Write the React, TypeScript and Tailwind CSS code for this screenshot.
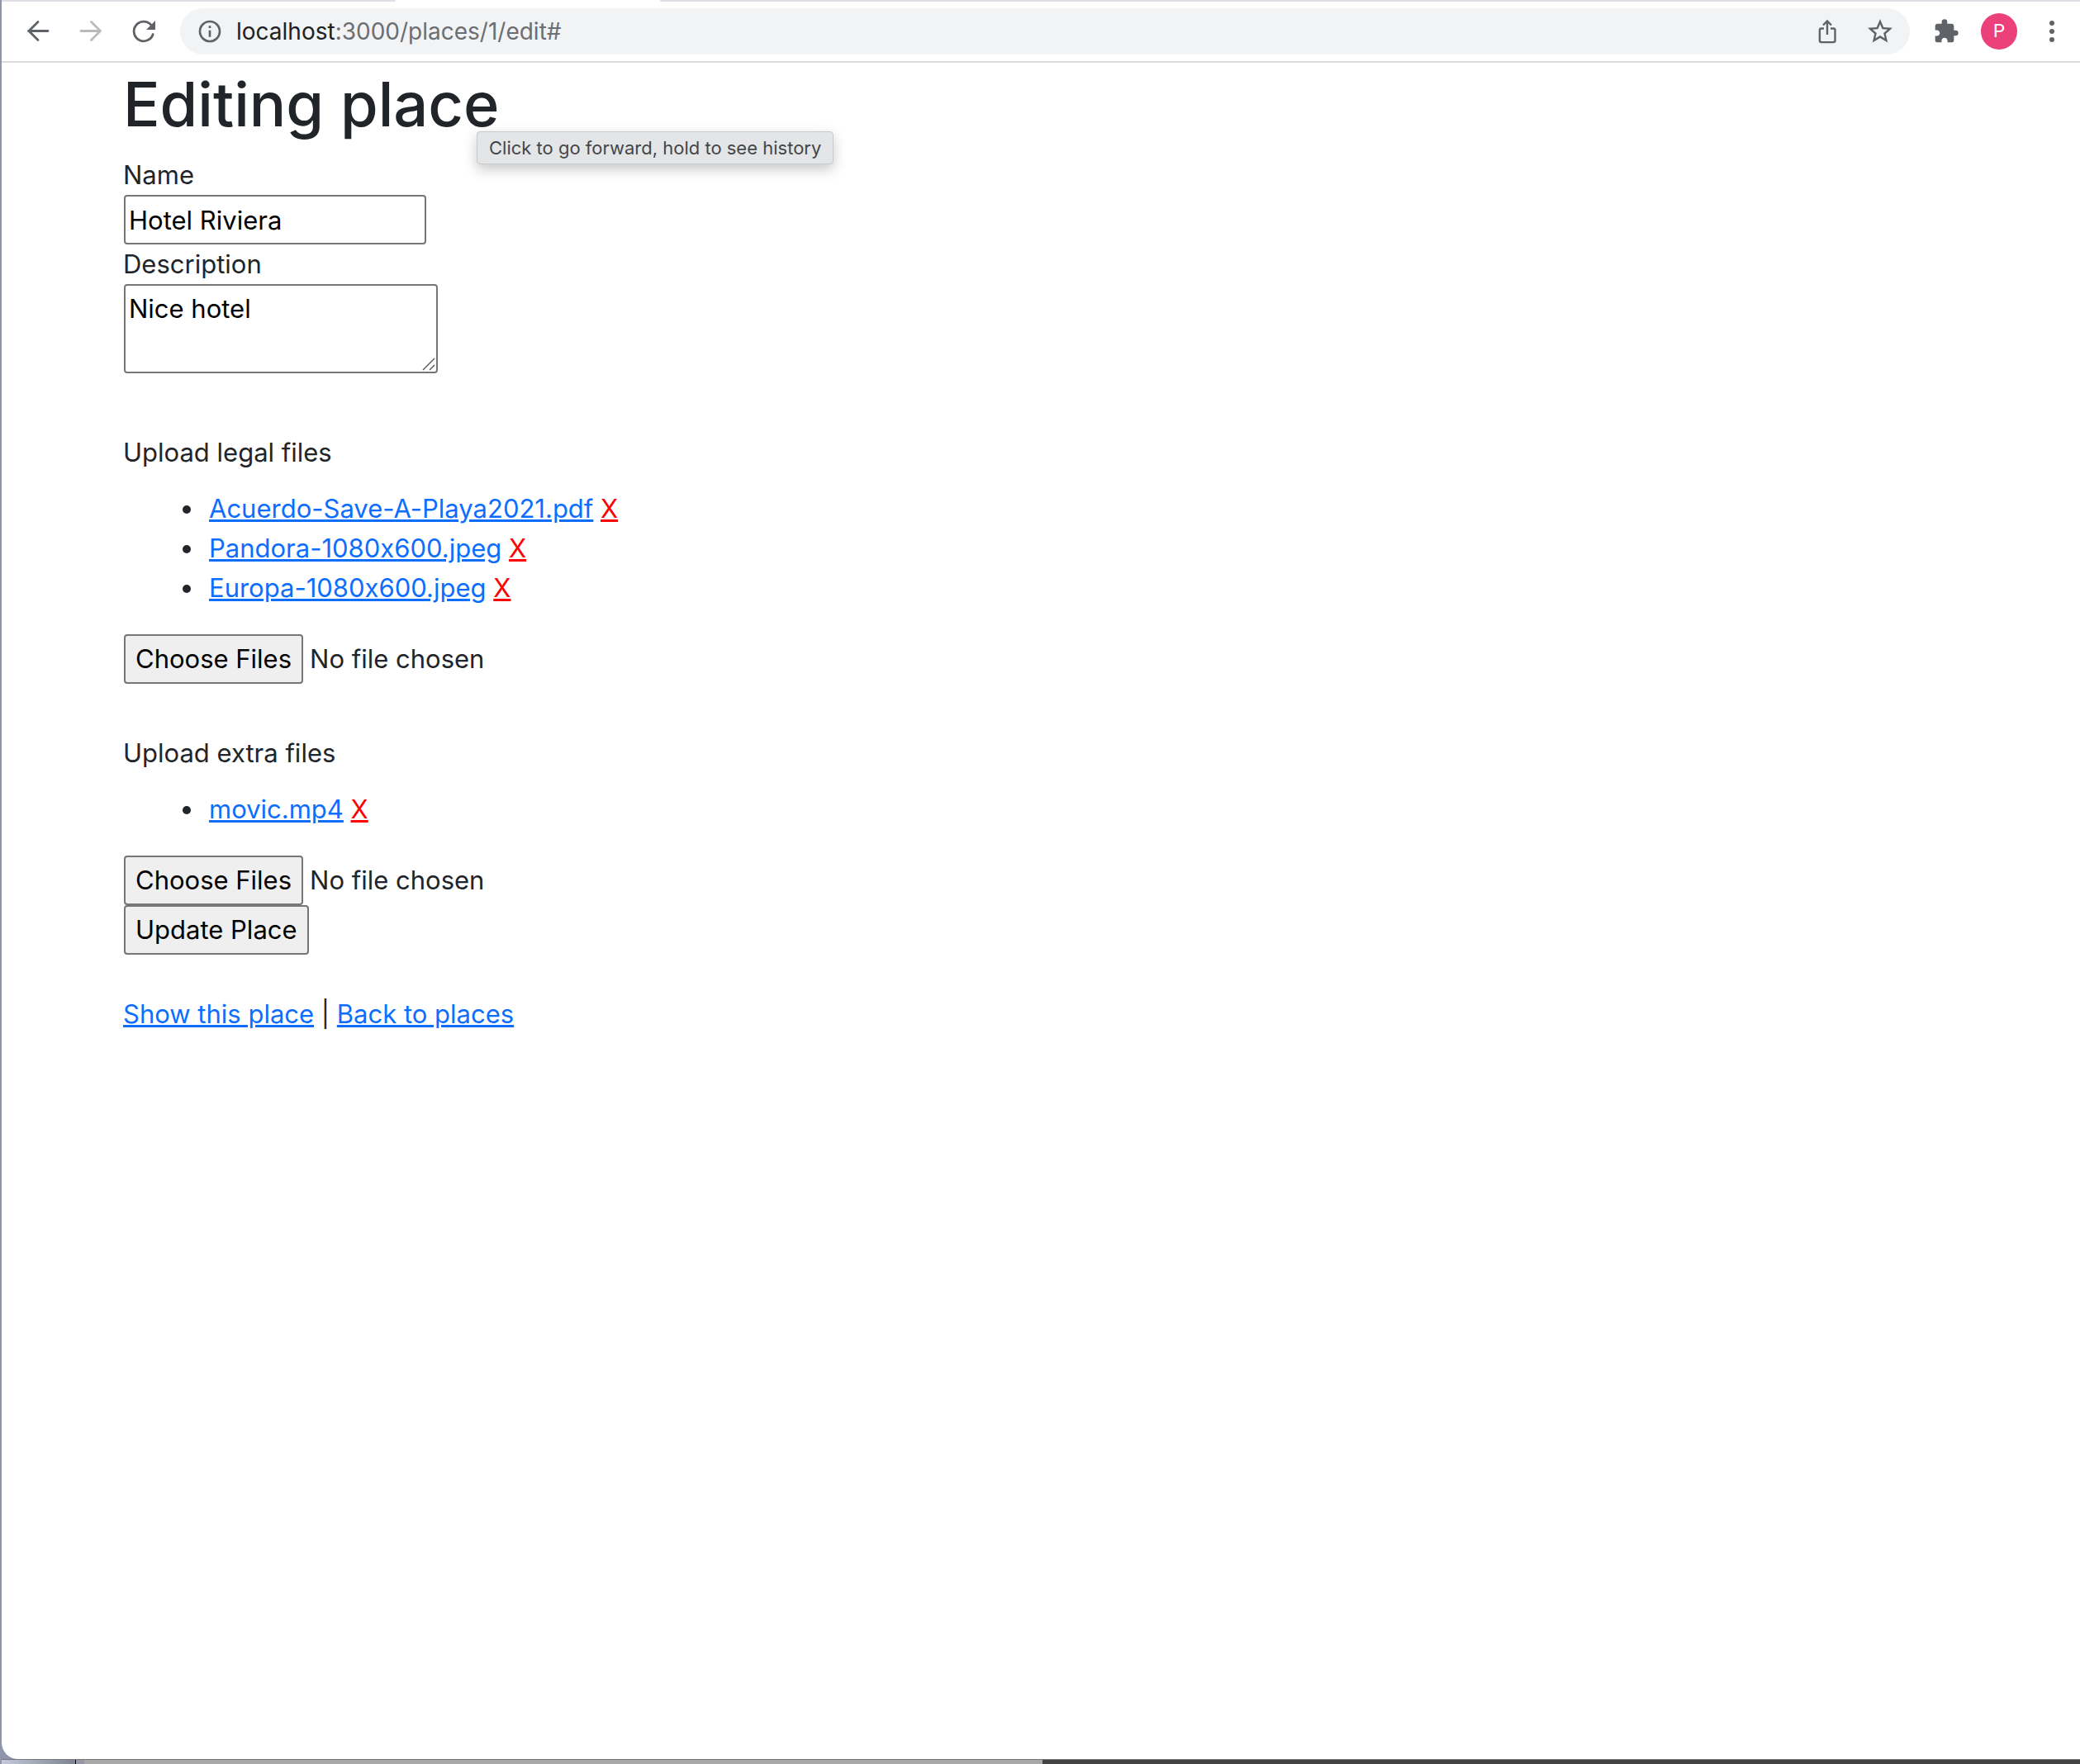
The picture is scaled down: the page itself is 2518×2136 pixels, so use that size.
import React from "react";

const links = "text-[#0d6efd] underline";
const field = "rounded border-2 border-[#767676] bg-white text-black";
const fileInput =
  "ml-px block w-full text-[31px] leading-[48px] h-[60px] file:mr-2 file:h-[60px] file:rounded file:border-2 file:border-solid file:border-[#767676] file:bg-[#efefef] file:px-3 file:text-black";

function FileList({ files }: { files: string[] }) {
  return (
    <ul className="mb-8 mt-5 list-outside list-disc pl-[99px]">
      {files.map((f) => (
        <li key={f} className="pl-[5px]">
          <a href="#" className={links}>{f}</a>{" "}
          <a href="#" aria-label={"Remove " + f} className="text-[#ff0000] underline">X</a>
        </li>
      ))}
    </ul>
  );
}

function Toolbar() {
  return (
    <header className="shrink-0 border-b-2 border-[#dcdcdd] bg-white text-[#5f6368]">
      <div className="flex h-0.5">
        <div className="w-[477px] rounded-br-sm bg-[#dfdfe5]" />
        <div className="w-[320px] bg-white" />
        <div className="grow rounded-bl-sm bg-[#dfdfe5]" />
      </div>
      <div className="flex h-[72px] items-center pl-6 pr-[14px]">
        <button aria-label="Back" className="size-10">
          <svg viewBox="0 0 40 40" className="size-10" fill="none" stroke="currentColor" strokeWidth="2.8" strokeLinecap="round" strokeLinejoin="round"><path d="M32 19.500H8.500M20 8.500l-11 11 11 11" /></svg>
        </button>
        <button aria-label="Forward" className="ml-6 size-10 text-[#bababc]">
          <svg viewBox="0 0 40 40" className="size-10" fill="none" stroke="currentColor" strokeWidth="2.8" strokeLinecap="round" strokeLinejoin="round"><path d="M8 19.500h23.500M20.500 8.500l11 11-11 11" /></svg>
        </button>
        <button aria-label="Reload" className="ml-6 size-10">
          <svg viewBox="0 0 40 40" className="size-10" fill="none" stroke="currentColor" strokeWidth="2.800" strokeLinecap="round"><path d="M31.200 23.500A11.800 11.800 0 1 1 28.500 11.800" /><path d="M34 7v11H23z" fill="currentColor" stroke="none" /></svg>
        </button>
        <div className="ml-6 flex h-14 grow items-center rounded-full bg-[#f1f3f4] pl-5 pr-[18px]">
          <svg viewBox="0 0 24 24" className="size-8 shrink-0" fill="currentColor"><path d="M11 17h2v-6h-2v6zm1-15a10 10 0 1 0 0 20 10 10 0 0 0 0-20zm0 18a8 8 0 1 1 0-16 8 8 0 0 1 0 16zM11 9h2V7h-2v2z" /></svg>
          <div className="ml-4 grow text-[28px] leading-10 text-[#6b6e72]">
            <span className="text-[#202124]">localhost</span>:3000/places/1/edit#
          </div>
          <button aria-label="Share" className="size-9">
            <svg viewBox="0 0 36 36" className="size-9" fill="none" stroke="currentColor" strokeWidth="2.400"><path d="M14 14.500h-3.100a2 2 0 0 0-2 2v12.600a2 2 0 0 0 2 2h14.600a2 2 0 0 0 2-2V16.500a2 2 0 0 0-2-2H22M18 22V6M13 10.500l5-5 5 5" /></svg>
          </button>
          <button aria-label="Bookmark" className="ml-7 size-9">
            <svg viewBox="0 0 24 24" className="size-9" fill="currentColor"><path d="M22 9.240l-7.190-.62L12 2 9.190 8.630 2 9.240l5.460 4.730L5.820 21 12 17.270 18.180 21l-1.630-7.030L22 9.240zM12 15.400l-3.760 2.270 1-4.280-3.320-2.880 4.380-.38L12 6.100l1.710 4.040 4.380.38-3.320 2.880 1 4.280L12 15.400z" /></svg>
          </button>
        </div>
        <button aria-label="Extensions" className="ml-7 size-8">
          <svg viewBox="0 0 24 24" className="size-8" fill="currentColor"><path d="M20.500 11H19V7c0-1.100-.9-2-2-2h-4V3.500a2.500 2.500 0 0 0-5 0V5H4c-1.100 0-1.990.9-1.990 2v3.800H3.500c1.490 0 2.700 1.210 2.700 2.700s-1.210 2.700-2.700 2.700H2V20c0 1.100.9 2 2 2h3.800v-1.500c0-1.490 1.210-2.700 2.700-2.700s2.700 1.210 2.700 2.700V22H17c1.100 0 2-.9 2-2v-4h1.500a2.500 2.500 0 0 0 0-5z" /></svg>
        </button>
        <button aria-label="Profile" className="ml-[26px] size-11 rounded-full bg-[#ec407a] font-[Roboto,sans-serif] text-[22px] leading-[44px] text-white">P</button>
        <button aria-label="Menu" className="ml-[22px] size-10">
          <svg viewBox="0 0 40 40" className="size-10" fill="currentColor"><circle cx="20" cy="10" r="3" /><circle cx="20" cy="20" r="3" /><circle cx="20" cy="30" r="3" /></svg>
        </button>
      </div>
    </header>
  );
}

export default function App() {
  return (
    <div className="relative flex min-h-screen flex-col bg-[#8f96ab] pl-0.5 font-[Inter,'Liberation_Sans',sans-serif] [font-feature-settings:'calt'_0]">
      <div className="flex grow flex-col overflow-hidden rounded-bl-[20px] bg-white">
        <Toolbar />
        <main className="pl-[147px] text-[31px] leading-[48px] text-[#212529]">
          <h1 className="mb-3 text-[74px] font-medium leading-[100px]">Editing place</h1>
          <form>
            <label htmlFor="name" className="block">Name</label>
            <input id="name" defaultValue="Hotel Riviera" className={"ml-px block h-[60px] w-[366px] px-1 " + field} />
            <label htmlFor="description" className="block">Description</label>
            <div className="relative ml-px w-[380px]">
              <textarea id="description" rows={2} defaultValue="Nice hotel" className={"block h-[108px] w-full resize-none p-1 " + field} />
              <svg viewBox="0 0 16 16" className="absolute bottom-[3px] right-[3px] size-4" fill="none" stroke="#555" strokeWidth="1.4"><path d="M1 15L15 1M9 15l6-6" /></svg>
            </div>
            <label htmlFor="legal" className="mt-[72px] block">Upload legal files</label>
            <FileList files={["Acuerdo-Save-A-Playa2021.pdf", "Pandora-1080x600.jpeg", "Europa-1080x600.jpeg"]} />
            <input id="legal" type="file" multiple className={fileInput} />
            <label htmlFor="extra" className="mt-[60px] block">Upload extra files</label>
            <FileList files={["movic.mp4"]} />
            <input id="extra" type="file" multiple className={fileInput} />
            <button type="submit" className="ml-px block h-[60px] rounded border-2 border-[#767676] bg-[#efefef] px-3 text-black">Update Place</button>
          </form>
          <nav className="mt-12">
            <a href="#" className={links}>Show this place</a> | <a href="#" className={links}>Back to places</a>
          </nav>
        </main>
      </div>
      <footer className="flex h-1.5 shrink-0 border-t border-[#777]">
        <div className="w-[89px] bg-gradient-to-r from-[#c5cadb] to-[#7f8494]" />
        <div className="w-px bg-black" />
        <div className="w-[10px] bg-[#9599a5]" />
        <div className="w-[1160px] bg-[#a9a9a9]" />
        <div className="grow bg-[#444445]" />
      </footer>
      <div role="tooltip" className="absolute left-[577px] top-[159px] rounded-sm border border-[#c9cacb] bg-[#e4e5e7] px-[14px] text-[22px] leading-[38px] text-[#454647] shadow-[0_6px_16px_rgba(0,0,0,0.22)]">
        Click to go forward, hold to see history
      </div>
    </div>
  );
}
